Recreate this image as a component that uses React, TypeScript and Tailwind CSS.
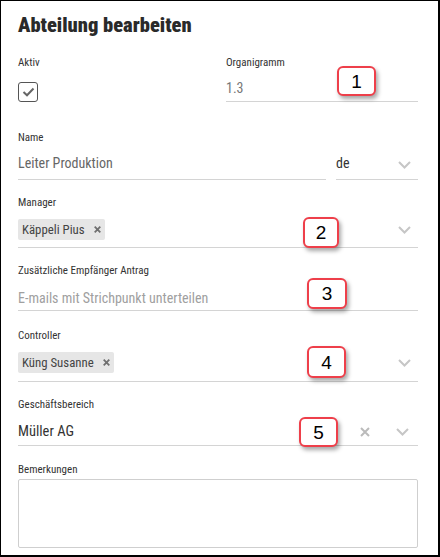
import React from "react";

const F = "font-['Roboto_Condensed',Roboto,sans-serif]";

function Chevron() {
  return (
    <svg width="13" height="8" viewBox="0 0 13 8" className="shrink-0">
      <polyline points="1,1 6.5,6.5 12,1" fill="none" stroke="#c6c6c6" strokeWidth="2" />
    </svg>
  );
}

function SmallX({ color = "#777", size = 7, w = 1.6 }: { color?: string; size?: number; w?: number }) {
  return (
    <svg width={size} height={size} viewBox="0 0 10 10" className="shrink-0">
      <path d="M1 1 L9 9 M9 1 L1 9" stroke={color} strokeWidth={w * (10 / size)} fill="none" />
    </svg>
  );
}

function Label({ children }: { children: React.ReactNode }) {
  return <div className={`${F} text-[11px] leading-[12px] text-[#333] whitespace-nowrap`}>{children}</div>;
}

function Chip({ text }: { text: string }) {
  return (
    <div className={`${F} inline-flex items-center h-[21px] pl-[4px] pr-[4px] bg-[#e6e6e6] rounded-[2px] text-[12.8px] text-[#444] gap-[9px]`}>
      <span>{text}</span>
      <SmallX color="#6f6f6f" size={7} w={1.8} />
    </div>
  );
}

function Callout({ n, cls }: { n: string; cls: string }) {
  return (
    <div
      className={`absolute ${cls} flex items-center justify-center bg-white border-2 border-[#ee3f4a] rounded-[6px] shadow-[2px_3px_4px_rgba(0,0,0,0.35)] font-['Liberation_Sans',Arial,sans-serif] text-[19px] leading-none text-black`}
    >
      {n}
    </div>
  );
}

export default function App() {
  return (
    <div className="relative w-[440px] h-[557px] bg-white border-l border-t border-r-2 border-b-2 border-black overflow-hidden">
      <div className="pl-[17px] pr-[20px] pt-[12px]">
        <div className={`${F} text-[20.5px] leading-[24px] font-black text-[#2a2a2a]`}>Abteilung bearbeiten</div>

        <div className="grid grid-cols-2 gap-x-4 mt-[20px]">
          <div>
            <Label>Aktiv</Label>
            <div className="mt-[13px] w-[20px] h-[20px] border-[1.5px] border-[#555] rounded-[3px] flex items-center justify-center">
              <svg width="13" height="10" viewBox="0 0 13 10">
                <polyline points="1.5,5 5,8.3 11.5,1.5" fill="none" stroke="#666" strokeWidth="2" />
              </svg>
            </div>
          </div>
          <div>
            <Label>Organigramm</Label>
            <div className={`${F} mt-[10px] h-[23px] pb-[3px] border-b border-[#d4d4d4] text-[14px] leading-[19px] text-[#777]`}>1.3</div>
          </div>
        </div>

        <div className="mt-[30px]">
          <Label>Name</Label>
          <div className="mt-[9px] flex gap-[10px]">
            <div className={`${F} flex-1 h-[27px] pb-[6px] border-b border-[#d4d4d4] text-[14px] leading-[20px] text-[#666]`}>Leiter Produktion</div>
            <div className={`${F} w-[82px] h-[27px] pb-[6px] border-b border-[#d4d4d4] flex items-start justify-between pr-[7px] text-[14px] leading-[20px] text-[#333]`}>
              <span>de</span>
              <span className="mt-[8px]"><Chevron /></span>
            </div>
          </div>
        </div>

        <div className="mt-[17px]">
          <Label>Manager</Label>
          <div className="mt-[10px] pb-[7px] border-b border-[#d4d4d4] flex items-center justify-between pr-[7px]">
            <Chip text="Käppeli Pius" />
            <Chevron />
          </div>
        </div>

        <div className="mt-[17px]">
          <Label>Zusätzliche Empfänger Antrag</Label>
          <div className={`${F} mt-[11px] h-[23px] pb-[3px] border-b border-[#d4d4d4] text-[14px] leading-[20px] text-[#a0a0a0]`}>E-mails mit Strichpunkt unterteilen</div>
        </div>

        <div className="mt-[19px]">
          <Label>Controller</Label>
          <div className="mt-[10px] pb-[8px] border-b border-[#d4d4d4] flex items-center justify-between pr-[7px]">
            <Chip text="Küng Susanne" />
            <Chevron />
          </div>
        </div>

        <div className="mt-[17px]">
          <Label>Geschäftsbereich</Label>
          <div className={`${F} mt-[11px] h-[24px] pb-[4px] border-b border-[#d4d4d4] flex items-center text-[14.5px] leading-[20px] text-[#333] pr-[9px]`}>
            <span className="flex-1">Müller AG</span>
            <span className="mr-[26px]"><SmallX color="#bbb" size={10} w={2} /></span>
            <Chevron />
          </div>
        </div>

        <div className="mt-[18px]">
          <Label>Bemerkungen</Label>
          <div className="mt-[3px] h-[69px] border border-[#cfcfcf] rounded-[2px]" />
        </div>
      </div>

      <Callout n="1" cls="left-[336px] top-[65px] w-[39px] h-[30px]" />
      <Callout n="2" cls="left-[302px] top-[216px] w-[36px] h-[31px]" />
      <Callout n="3" cls="left-[306px] top-[277px] w-[40px] h-[31px]" />
      <Callout n="4" cls="left-[306px] top-[345px] w-[39px] h-[32px]" />
      <Callout n="5" cls="left-[298px] top-[416px] w-[39px] h-[30px]" />
    </div>
  );
}
